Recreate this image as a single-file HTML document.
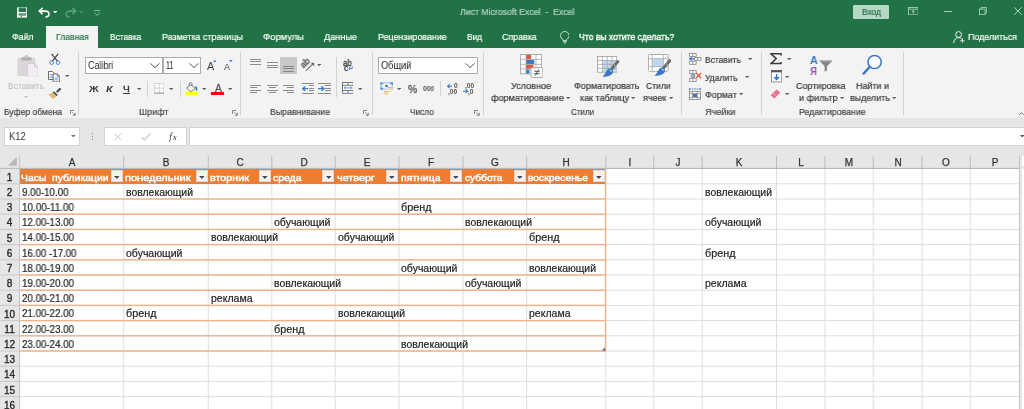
<!DOCTYPE html>
<html><head><meta charset="utf-8"><title>Excel</title>
<style>
html,body{margin:0;padding:0;}
body{width:1024px;height:409px;overflow:hidden;background:#fff;position:relative;font-family:"Liberation Sans",sans-serif;}
.b{position:absolute;display:block;}
.t{position:absolute;white-space:pre;transform-origin:0 50%;will-change:transform;}
</style></head><body>
<div class="b" style="left:0.00px;top:0.00px;width:1024.00px;height:48.00px;background:#217346;"></div>
<div class="b" style="left:0.00px;top:48.00px;width:1024.00px;height:69.90px;background:#f3f3f3;"></div>
<div class="b" style="left:0.00px;top:117.90px;width:1024.00px;height:37.10px;background:#e6e6e6;"></div>
<div class="b" style="left:46.30px;top:26.00px;width:52.20px;height:23.00px;background:#f3f3f3;"></div>
<div class="b" style="left:853.00px;top:4.60px;width:35.50px;height:14.40px;background:#b7d8c5;border-radius:1.2px;"></div>
<div class="b" style="left:77.80px;top:51.50px;width:1.00px;height:63.50px;background:#d2d2d2;"></div>
<div class="b" style="left:240.30px;top:51.50px;width:1.00px;height:63.50px;background:#d2d2d2;"></div>
<div class="b" style="left:371.50px;top:51.50px;width:1.00px;height:63.50px;background:#d2d2d2;"></div>
<div class="b" style="left:483.20px;top:51.50px;width:1.00px;height:63.50px;background:#d2d2d2;"></div>
<div class="b" style="left:680.90px;top:51.50px;width:1.00px;height:63.50px;background:#d2d2d2;"></div>
<div class="b" style="left:761.30px;top:51.50px;width:1.00px;height:63.50px;background:#d2d2d2;"></div>
<div class="b" style="left:903.00px;top:51.50px;width:1.00px;height:63.50px;background:#d2d2d2;"></div>
<div class="b" style="left:147.00px;top:81.30px;width:1.00px;height:15.30px;background:#d2d2d2;"></div>
<div class="b" style="left:179.60px;top:81.30px;width:1.00px;height:15.30px;background:#d2d2d2;"></div>
<div class="b" style="left:336.00px;top:56.50px;width:1.00px;height:40.50px;background:#d2d2d2;"></div>
<div class="b" style="left:440.20px;top:81.00px;width:1.00px;height:15.40px;background:#d2d2d2;"></div>
<svg class="b" style="left:69.90px;top:109.60px;" width="6.00" height="6.00" viewBox="0 0 6 6"><path d="M0.5 4V0.5H4" fill="none" stroke="#777" stroke-width="0.9"/><path d="M2.3 2.3L5 5M5.3 2.8V5.3H2.8" fill="none" stroke="#777" stroke-width="0.9"/></svg>
<svg class="b" style="left:232.20px;top:109.60px;" width="6.00" height="6.00" viewBox="0 0 6 6"><path d="M0.5 4V0.5H4" fill="none" stroke="#777" stroke-width="0.9"/><path d="M2.3 2.3L5 5M5.3 2.8V5.3H2.8" fill="none" stroke="#777" stroke-width="0.9"/></svg>
<svg class="b" style="left:363.40px;top:109.60px;" width="6.00" height="6.00" viewBox="0 0 6 6"><path d="M0.5 4V0.5H4" fill="none" stroke="#777" stroke-width="0.9"/><path d="M2.3 2.3L5 5M5.3 2.8V5.3H2.8" fill="none" stroke="#777" stroke-width="0.9"/></svg>
<svg class="b" style="left:474.10px;top:109.60px;" width="6.00" height="6.00" viewBox="0 0 6 6"><path d="M0.5 4V0.5H4" fill="none" stroke="#777" stroke-width="0.9"/><path d="M2.3 2.3L5 5M5.3 2.8V5.3H2.8" fill="none" stroke="#777" stroke-width="0.9"/></svg>
<svg class="b" style="left:23.90px;top:96.15px;" width="4.20" height="2.30" viewBox="0 0 4.2 2.3"><path d="M0 0H4.2L2.1 2.3Z" fill="#c4c4c4"/></svg>
<svg class="b" style="left:64.80px;top:75.35px;" width="4.20" height="2.30" viewBox="0 0 4.2 2.3"><path d="M0 0H4.2L2.1 2.3Z" fill="#666"/></svg>
<div class="b" style="left:85.20px;top:57.20px;width:77.80px;height:16.80px;background:#fff;border:1px solid #ababab;box-sizing:border-box;"></div>
<div class="b" style="left:162.70px;top:57.20px;width:38.80px;height:16.80px;background:#fff;border:1px solid #ababab;box-sizing:border-box;"></div>
<svg class="b" style="left:150.00px;top:63.40px;" width="10.00" height="5.20" viewBox="0 0 10 5.2"><path d="M0.4 0.4L5.0 4.6000000000000005L9.6 0.4" fill="none" stroke="#444" stroke-width="0.9"/></svg>
<svg class="b" style="left:188.50px;top:63.40px;" width="10.00" height="5.20" viewBox="0 0 10 5.2"><path d="M0.4 0.4L5.0 4.6000000000000005L9.6 0.4" fill="none" stroke="#444" stroke-width="0.9"/></svg>
<svg class="b" style="left:212.50px;top:59.80px;" width="3.60" height="2.30" viewBox="0 0 3.6 2.3"><path d="M0 2.3L1.8 0L3.6 2.3Z" fill="#2b7cd3"/></svg>
<svg class="b" style="left:229.00px;top:59.80px;" width="3.60" height="2.30" viewBox="0 0 3.6 2.3"><path d="M0 0L1.8 2.3L3.6 0Z" fill="#2b7cd3"/></svg>
<div class="b" style="left:122.90px;top:92.90px;width:7.40px;height:1.00px;background:#3b3b3b;"></div>
<svg class="b" style="left:136.90px;top:88.15px;" width="4.20" height="2.30" viewBox="0 0 4.2 2.3"><path d="M0 0H4.2L2.1 2.3Z" fill="#666"/></svg>
<svg class="b" style="left:169.30px;top:88.15px;" width="4.20" height="2.30" viewBox="0 0 4.2 2.3"><path d="M0 0H4.2L2.1 2.3Z" fill="#666"/></svg>
<svg class="b" style="left:201.90px;top:88.15px;" width="4.20" height="2.30" viewBox="0 0 4.2 2.3"><path d="M0 0H4.2L2.1 2.3Z" fill="#666"/></svg>
<svg class="b" style="left:227.70px;top:88.15px;" width="4.20" height="2.30" viewBox="0 0 4.2 2.3"><path d="M0 0H4.2L2.1 2.3Z" fill="#666"/></svg>
<div class="b" style="left:378.40px;top:57.20px;width:99.30px;height:16.80px;background:#fff;border:1px solid #ababab;box-sizing:border-box;"></div>
<svg class="b" style="left:464.60px;top:63.40px;" width="10.00" height="5.20" viewBox="0 0 10 5.2"><path d="M0.4 0.4L5.0 4.6000000000000005L9.6 0.4" fill="none" stroke="#444" stroke-width="0.9"/></svg>
<svg class="b" style="left:396.80px;top:87.95px;" width="4.20" height="2.30" viewBox="0 0 4.2 2.3"><path d="M0 0H4.2L2.1 2.3Z" fill="#666"/></svg>
<svg class="b" style="left:566.00px;top:97.05px;" width="4.20" height="2.30" viewBox="0 0 4.2 2.3"><path d="M0 0H4.2L2.1 2.3Z" fill="#666"/></svg>
<svg class="b" style="left:631.00px;top:97.05px;" width="4.20" height="2.30" viewBox="0 0 4.2 2.3"><path d="M0 0H4.2L2.1 2.3Z" fill="#666"/></svg>
<svg class="b" style="left:668.90px;top:97.05px;" width="4.20" height="2.30" viewBox="0 0 4.2 2.3"><path d="M0 0H4.2L2.1 2.3Z" fill="#666"/></svg>
<svg class="b" style="left:747.60px;top:58.25px;" width="4.20" height="2.30" viewBox="0 0 4.2 2.3"><path d="M0 0H4.2L2.1 2.3Z" fill="#666"/></svg>
<svg class="b" style="left:745.00px;top:76.05px;" width="4.20" height="2.30" viewBox="0 0 4.2 2.3"><path d="M0 0H4.2L2.1 2.3Z" fill="#666"/></svg>
<svg class="b" style="left:738.90px;top:93.25px;" width="4.20" height="2.30" viewBox="0 0 4.2 2.3"><path d="M0 0H4.2L2.1 2.3Z" fill="#666"/></svg>
<svg class="b" style="left:786.50px;top:58.25px;" width="4.20" height="2.30" viewBox="0 0 4.2 2.3"><path d="M0 0H4.2L2.1 2.3Z" fill="#666"/></svg>
<svg class="b" style="left:785.10px;top:75.65px;" width="4.20" height="2.30" viewBox="0 0 4.2 2.3"><path d="M0 0H4.2L2.1 2.3Z" fill="#666"/></svg>
<svg class="b" style="left:785.10px;top:92.95px;" width="4.20" height="2.30" viewBox="0 0 4.2 2.3"><path d="M0 0H4.2L2.1 2.3Z" fill="#666"/></svg>
<svg class="b" style="left:839.70px;top:97.05px;" width="4.20" height="2.30" viewBox="0 0 4.2 2.3"><path d="M0 0H4.2L2.1 2.3Z" fill="#666"/></svg>
<svg class="b" style="left:891.70px;top:97.05px;" width="4.20" height="2.30" viewBox="0 0 4.2 2.3"><path d="M0 0H4.2L2.1 2.3Z" fill="#666"/></svg>
<div class="b" style="left:4.40px;top:126.80px;width:76.10px;height:19.50px;background:#fff;border:1px solid #d4d4d4;box-sizing:border-box;"></div>
<svg class="b" style="left:71.00px;top:134.95px;" width="4.60" height="2.50" viewBox="0 0 4.6 2.5"><path d="M0 0H4.6L2.3 2.5Z" fill="#777"/></svg>
<div class="b" style="left:91.80px;top:133.00px;width:1.00px;height:1.00px;background:#808080;"></div>
<div class="b" style="left:91.80px;top:136.00px;width:1.00px;height:1.00px;background:#808080;"></div>
<div class="b" style="left:91.80px;top:139.00px;width:1.00px;height:1.00px;background:#808080;"></div>
<div class="b" style="left:104.30px;top:126.80px;width:82.30px;height:19.50px;background:#fff;border:1px solid #d4d4d4;box-sizing:border-box;"></div>
<div class="b" style="left:189.30px;top:126.80px;width:840.00px;height:19.50px;background:#fff;border:1px solid #d4d4d4;box-sizing:border-box;"></div>
<svg class="b" style="left:114.30px;top:133.20px;" width="7.80" height="7.40" viewBox="0 0 7.8 7.4"><path d="M0.4 0.4L7.4 7M7.4 0.4L0.4 7" stroke="#c6c6c6" stroke-width="1" fill="none"/></svg>
<svg class="b" style="left:141.00px;top:133.20px;" width="9.80" height="7.40" viewBox="0 0 9.8 7.4"><path d="M0.5 4.2L3.3 6.9L9.3 0.5" stroke="#c6c6c6" stroke-width="1.1" fill="none"/></svg>
<svg class="b" style="left:1020.30px;top:134.95px;" width="4.60" height="2.50" viewBox="0 0 4.6 2.5"><path d="M0 0H4.6L2.3 2.5Z" fill="#555"/></svg>
<div class="b" style="left:0.00px;top:168.60px;width:1024.00px;height:240.40px;background:#fff;"></div>
<div class="b" style="left:0.00px;top:154.50px;width:1019.40px;height:14.10px;background:#e6e6e6;"></div>
<div class="b" style="left:0.00px;top:168.60px;width:19.60px;height:240.40px;background:#e6e6e6;"></div>
<div class="b" style="left:123px;top:169px;width:1px;height:240px;background:rgba(222,222,222,0.800)"></div>
<div class="b" style="left:124px;top:169px;width:1px;height:240px;background:rgba(222,222,222,0.200)"></div>
<div class="b" style="left:207px;top:169px;width:1px;height:240px;background:rgba(222,222,222,0.200)"></div>
<div class="b" style="left:208px;top:169px;width:1px;height:240px;background:rgba(222,222,222,0.800)"></div>
<div class="b" style="left:271px;top:169px;width:1px;height:240px;background:rgba(222,222,222,0.700)"></div>
<div class="b" style="left:272px;top:169px;width:1px;height:240px;background:rgba(222,222,222,0.300)"></div>
<div class="b" style="left:334px;top:169px;width:1px;height:240px;background:rgba(222,222,222,0.300)"></div>
<div class="b" style="left:335px;top:169px;width:1px;height:240px;background:rgba(222,222,222,0.700)"></div>
<div class="b" style="left:398px;top:169px;width:1px;height:240px;background:rgba(222,222,222,0.500)"></div>
<div class="b" style="left:399px;top:169px;width:1px;height:240px;background:rgba(222,222,222,0.500)"></div>
<div class="b" style="left:462px;top:169px;width:1px;height:240px;background:rgba(222,222,222,0.500)"></div>
<div class="b" style="left:463px;top:169px;width:1px;height:240px;background:rgba(222,222,222,0.500)"></div>
<div class="b" style="left:526px;top:169px;width:1px;height:240px;background:rgba(222,222,222,0.800)"></div>
<div class="b" style="left:527px;top:169px;width:1px;height:240px;background:rgba(222,222,222,0.200)"></div>
<div class="b" style="left:605px;top:169px;width:1px;height:240px;background:rgba(222,222,222,0.700)"></div>
<div class="b" style="left:606px;top:169px;width:1px;height:240px;background:rgba(222,222,222,0.300)"></div>
<div class="b" style="left:653px;top:169px;width:1px;height:240px;background:rgba(222,222,222,0.800)"></div>
<div class="b" style="left:654px;top:169px;width:1px;height:240px;background:rgba(222,222,222,0.200)"></div>
<div class="b" style="left:701px;top:169px;width:1px;height:240px;background:rgba(222,222,222,0.300)"></div>
<div class="b" style="left:702px;top:169px;width:1px;height:240px;background:rgba(222,222,222,0.700)"></div>
<div class="b" style="left:776px;top:169px;width:1px;height:240px;background:rgba(222,222,222,1.000)"></div>
<div class="b" style="left:824px;top:169px;width:1px;height:240px;background:rgba(222,222,222,0.600)"></div>
<div class="b" style="left:825px;top:169px;width:1px;height:240px;background:rgba(222,222,222,0.400)"></div>
<div class="b" style="left:872px;top:169px;width:1px;height:240px;background:rgba(222,222,222,0.300)"></div>
<div class="b" style="left:873px;top:169px;width:1px;height:240px;background:rgba(222,222,222,0.700)"></div>
<div class="b" style="left:921px;top:169px;width:1px;height:240px;background:rgba(222,222,222,0.500)"></div>
<div class="b" style="left:922px;top:169px;width:1px;height:240px;background:rgba(222,222,222,0.500)"></div>
<div class="b" style="left:969px;top:169px;width:1px;height:240px;background:rgba(222,222,222,0.200)"></div>
<div class="b" style="left:970px;top:169px;width:1px;height:240px;background:rgba(222,222,222,0.800)"></div>
<div class="b" style="left:20px;top:183px;width:999px;height:1px;background:rgba(222,222,222,0.700)"></div>
<div class="b" style="left:20px;top:184px;width:999px;height:1px;background:rgba(222,222,222,0.300)"></div>
<div class="b" style="left:20px;top:198px;width:999px;height:1px;background:rgba(222,222,222,0.500)"></div>
<div class="b" style="left:20px;top:199px;width:999px;height:1px;background:rgba(222,222,222,0.500)"></div>
<div class="b" style="left:20px;top:213px;width:999px;height:1px;background:rgba(222,222,222,0.300)"></div>
<div class="b" style="left:20px;top:214px;width:999px;height:1px;background:rgba(222,222,222,0.700)"></div>
<div class="b" style="left:20px;top:228px;width:999px;height:1px;background:rgba(222,222,222,0.100)"></div>
<div class="b" style="left:20px;top:229px;width:999px;height:1px;background:rgba(222,222,222,0.900)"></div>
<div class="b" style="left:20px;top:244px;width:999px;height:1px;background:rgba(222,222,222,0.900)"></div>
<div class="b" style="left:20px;top:245px;width:999px;height:1px;background:rgba(222,222,222,0.100)"></div>
<div class="b" style="left:20px;top:259px;width:999px;height:1px;background:rgba(222,222,222,0.700)"></div>
<div class="b" style="left:20px;top:260px;width:999px;height:1px;background:rgba(222,222,222,0.300)"></div>
<div class="b" style="left:20px;top:274px;width:999px;height:1px;background:rgba(222,222,222,0.500)"></div>
<div class="b" style="left:20px;top:275px;width:999px;height:1px;background:rgba(222,222,222,0.500)"></div>
<div class="b" style="left:20px;top:289px;width:999px;height:1px;background:rgba(222,222,222,0.300)"></div>
<div class="b" style="left:20px;top:290px;width:999px;height:1px;background:rgba(222,222,222,0.700)"></div>
<div class="b" style="left:20px;top:304px;width:999px;height:1px;background:rgba(222,222,222,0.100)"></div>
<div class="b" style="left:20px;top:305px;width:999px;height:1px;background:rgba(222,222,222,0.900)"></div>
<div class="b" style="left:20px;top:320px;width:999px;height:1px;background:rgba(222,222,222,0.900)"></div>
<div class="b" style="left:20px;top:321px;width:999px;height:1px;background:rgba(222,222,222,0.100)"></div>
<div class="b" style="left:20px;top:335px;width:999px;height:1px;background:rgba(222,222,222,0.700)"></div>
<div class="b" style="left:20px;top:336px;width:999px;height:1px;background:rgba(222,222,222,0.300)"></div>
<div class="b" style="left:20px;top:350px;width:999px;height:1px;background:rgba(222,222,222,0.500)"></div>
<div class="b" style="left:20px;top:351px;width:999px;height:1px;background:rgba(222,222,222,0.500)"></div>
<div class="b" style="left:20px;top:365px;width:999px;height:1px;background:rgba(222,222,222,0.300)"></div>
<div class="b" style="left:20px;top:366px;width:999px;height:1px;background:rgba(222,222,222,0.700)"></div>
<div class="b" style="left:20px;top:380px;width:999px;height:1px;background:rgba(222,222,222,0.100)"></div>
<div class="b" style="left:20px;top:381px;width:999px;height:1px;background:rgba(222,222,222,0.900)"></div>
<div class="b" style="left:20px;top:396px;width:999px;height:1px;background:rgba(222,222,222,0.900)"></div>
<div class="b" style="left:20px;top:397px;width:999px;height:1px;background:rgba(222,222,222,0.100)"></div>
<div class="b" style="left:20px;top:411px;width:999px;height:1px;background:rgba(222,222,222,0.700)"></div>
<div class="b" style="left:20px;top:412px;width:999px;height:1px;background:rgba(222,222,222,0.300)"></div>
<div class="b" style="left:123px;top:156px;width:1px;height:13px;background:rgba(188,188,188,0.800)"></div>
<div class="b" style="left:124px;top:156px;width:1px;height:13px;background:rgba(188,188,188,0.200)"></div>
<div class="b" style="left:207px;top:156px;width:1px;height:13px;background:rgba(188,188,188,0.200)"></div>
<div class="b" style="left:208px;top:156px;width:1px;height:13px;background:rgba(188,188,188,0.800)"></div>
<div class="b" style="left:271px;top:156px;width:1px;height:13px;background:rgba(188,188,188,0.700)"></div>
<div class="b" style="left:272px;top:156px;width:1px;height:13px;background:rgba(188,188,188,0.300)"></div>
<div class="b" style="left:334px;top:156px;width:1px;height:13px;background:rgba(188,188,188,0.300)"></div>
<div class="b" style="left:335px;top:156px;width:1px;height:13px;background:rgba(188,188,188,0.700)"></div>
<div class="b" style="left:398px;top:156px;width:1px;height:13px;background:rgba(188,188,188,0.500)"></div>
<div class="b" style="left:399px;top:156px;width:1px;height:13px;background:rgba(188,188,188,0.500)"></div>
<div class="b" style="left:462px;top:156px;width:1px;height:13px;background:rgba(188,188,188,0.500)"></div>
<div class="b" style="left:463px;top:156px;width:1px;height:13px;background:rgba(188,188,188,0.500)"></div>
<div class="b" style="left:526px;top:156px;width:1px;height:13px;background:rgba(188,188,188,0.800)"></div>
<div class="b" style="left:527px;top:156px;width:1px;height:13px;background:rgba(188,188,188,0.200)"></div>
<div class="b" style="left:605px;top:156px;width:1px;height:13px;background:rgba(188,188,188,0.700)"></div>
<div class="b" style="left:606px;top:156px;width:1px;height:13px;background:rgba(188,188,188,0.300)"></div>
<div class="b" style="left:653px;top:156px;width:1px;height:13px;background:rgba(188,188,188,0.800)"></div>
<div class="b" style="left:654px;top:156px;width:1px;height:13px;background:rgba(188,188,188,0.200)"></div>
<div class="b" style="left:701px;top:156px;width:1px;height:13px;background:rgba(188,188,188,0.300)"></div>
<div class="b" style="left:702px;top:156px;width:1px;height:13px;background:rgba(188,188,188,0.700)"></div>
<div class="b" style="left:776px;top:156px;width:1px;height:13px;background:rgba(188,188,188,1.000)"></div>
<div class="b" style="left:824px;top:156px;width:1px;height:13px;background:rgba(188,188,188,0.600)"></div>
<div class="b" style="left:825px;top:156px;width:1px;height:13px;background:rgba(188,188,188,0.400)"></div>
<div class="b" style="left:872px;top:156px;width:1px;height:13px;background:rgba(188,188,188,0.300)"></div>
<div class="b" style="left:873px;top:156px;width:1px;height:13px;background:rgba(188,188,188,0.700)"></div>
<div class="b" style="left:921px;top:156px;width:1px;height:13px;background:rgba(188,188,188,0.500)"></div>
<div class="b" style="left:922px;top:156px;width:1px;height:13px;background:rgba(188,188,188,0.500)"></div>
<div class="b" style="left:969px;top:156px;width:1px;height:13px;background:rgba(188,188,188,0.200)"></div>
<div class="b" style="left:970px;top:156px;width:1px;height:13px;background:rgba(188,188,188,0.800)"></div>
<div class="b" style="left:19px;top:156px;width:1px;height:253px;background:rgba(196,196,196,0.900)"></div>
<div class="b" style="left:20px;top:156px;width:1px;height:253px;background:rgba(196,196,196,0.100)"></div>
<div class="b" style="left:0px;top:183px;width:20px;height:1px;background:rgba(201,201,201,0.700)"></div>
<div class="b" style="left:0px;top:184px;width:20px;height:1px;background:rgba(201,201,201,0.300)"></div>
<div class="b" style="left:0px;top:198px;width:20px;height:1px;background:rgba(201,201,201,0.500)"></div>
<div class="b" style="left:0px;top:199px;width:20px;height:1px;background:rgba(201,201,201,0.500)"></div>
<div class="b" style="left:0px;top:213px;width:20px;height:1px;background:rgba(201,201,201,0.300)"></div>
<div class="b" style="left:0px;top:214px;width:20px;height:1px;background:rgba(201,201,201,0.700)"></div>
<div class="b" style="left:0px;top:228px;width:20px;height:1px;background:rgba(201,201,201,0.100)"></div>
<div class="b" style="left:0px;top:229px;width:20px;height:1px;background:rgba(201,201,201,0.900)"></div>
<div class="b" style="left:0px;top:244px;width:20px;height:1px;background:rgba(201,201,201,0.900)"></div>
<div class="b" style="left:0px;top:245px;width:20px;height:1px;background:rgba(201,201,201,0.100)"></div>
<div class="b" style="left:0px;top:259px;width:20px;height:1px;background:rgba(201,201,201,0.700)"></div>
<div class="b" style="left:0px;top:260px;width:20px;height:1px;background:rgba(201,201,201,0.300)"></div>
<div class="b" style="left:0px;top:274px;width:20px;height:1px;background:rgba(201,201,201,0.500)"></div>
<div class="b" style="left:0px;top:275px;width:20px;height:1px;background:rgba(201,201,201,0.500)"></div>
<div class="b" style="left:0px;top:289px;width:20px;height:1px;background:rgba(201,201,201,0.300)"></div>
<div class="b" style="left:0px;top:290px;width:20px;height:1px;background:rgba(201,201,201,0.700)"></div>
<div class="b" style="left:0px;top:304px;width:20px;height:1px;background:rgba(201,201,201,0.100)"></div>
<div class="b" style="left:0px;top:305px;width:20px;height:1px;background:rgba(201,201,201,0.900)"></div>
<div class="b" style="left:0px;top:320px;width:20px;height:1px;background:rgba(201,201,201,0.900)"></div>
<div class="b" style="left:0px;top:321px;width:20px;height:1px;background:rgba(201,201,201,0.100)"></div>
<div class="b" style="left:0px;top:335px;width:20px;height:1px;background:rgba(201,201,201,0.700)"></div>
<div class="b" style="left:0px;top:336px;width:20px;height:1px;background:rgba(201,201,201,0.300)"></div>
<div class="b" style="left:0px;top:350px;width:20px;height:1px;background:rgba(201,201,201,0.500)"></div>
<div class="b" style="left:0px;top:351px;width:20px;height:1px;background:rgba(201,201,201,0.500)"></div>
<div class="b" style="left:0px;top:365px;width:20px;height:1px;background:rgba(201,201,201,0.300)"></div>
<div class="b" style="left:0px;top:366px;width:20px;height:1px;background:rgba(201,201,201,0.700)"></div>
<div class="b" style="left:0px;top:380px;width:20px;height:1px;background:rgba(201,201,201,0.100)"></div>
<div class="b" style="left:0px;top:381px;width:20px;height:1px;background:rgba(201,201,201,0.900)"></div>
<div class="b" style="left:0px;top:396px;width:20px;height:1px;background:rgba(201,201,201,0.900)"></div>
<div class="b" style="left:0px;top:397px;width:20px;height:1px;background:rgba(201,201,201,0.100)"></div>
<div class="b" style="left:0px;top:411px;width:20px;height:1px;background:rgba(201,201,201,0.700)"></div>
<div class="b" style="left:0px;top:412px;width:20px;height:1px;background:rgba(201,201,201,0.300)"></div>
<div class="b" style="left:0px;top:167px;width:1019px;height:1px;background:rgba(180,180,180,0.100)"></div>
<div class="b" style="left:0px;top:168px;width:1019px;height:1px;background:rgba(180,180,180,0.900)"></div>
<svg class="b" style="left:7.90px;top:157.20px;" width="8.80" height="8.80" viewBox="0 0 8.8 8.8"><path d="M8.8 0V8.8H0Z" fill="#b7b7b7"/></svg>
<div class="b" style="left:1019.40px;top:146.30px;width:5.00px;height:270.00px;background:#e6e6e6;"></div>
<div class="b" style="left:1018.90px;top:155.00px;width:1.00px;height:260.00px;background:#c6c6c6;"></div>
<div class="b" style="left:1022.00px;top:155.70px;width:3.00px;height:10.30px;background:#fff;"></div>
<div class="b" style="left:1022.00px;top:168.60px;width:3.00px;height:250.00px;background:#fdfdfd;"></div>
<div class="b" style="left:19.90px;top:168.60px;width:586.50px;height:15.30px;background:#ed7d31;"></div>
<div class="b" style="left:20px;top:198px;width:586px;height:1px;background:rgba(244,177,131,0.700)"></div>
<div class="b" style="left:20px;top:199px;width:586px;height:1px;background:rgba(244,177,131,0.700)"></div>
<div class="b" style="left:20px;top:213px;width:586px;height:1px;background:rgba(244,177,131,0.500)"></div>
<div class="b" style="left:20px;top:214px;width:586px;height:1px;background:rgba(244,177,131,0.900)"></div>
<div class="b" style="left:20px;top:228px;width:586px;height:1px;background:rgba(244,177,131,0.300)"></div>
<div class="b" style="left:20px;top:229px;width:586px;height:1px;background:rgba(244,177,131,1.000)"></div>
<div class="b" style="left:20px;top:230px;width:586px;height:1px;background:rgba(244,177,131,0.100)"></div>
<div class="b" style="left:20px;top:243px;width:586px;height:1px;background:rgba(244,177,131,0.100)"></div>
<div class="b" style="left:20px;top:244px;width:586px;height:1px;background:rgba(244,177,131,1.000)"></div>
<div class="b" style="left:20px;top:245px;width:586px;height:1px;background:rgba(244,177,131,0.300)"></div>
<div class="b" style="left:20px;top:259px;width:586px;height:1px;background:rgba(244,177,131,0.900)"></div>
<div class="b" style="left:20px;top:260px;width:586px;height:1px;background:rgba(244,177,131,0.500)"></div>
<div class="b" style="left:20px;top:274px;width:586px;height:1px;background:rgba(244,177,131,0.700)"></div>
<div class="b" style="left:20px;top:275px;width:586px;height:1px;background:rgba(244,177,131,0.700)"></div>
<div class="b" style="left:20px;top:289px;width:586px;height:1px;background:rgba(244,177,131,0.500)"></div>
<div class="b" style="left:20px;top:290px;width:586px;height:1px;background:rgba(244,177,131,0.900)"></div>
<div class="b" style="left:20px;top:304px;width:586px;height:1px;background:rgba(244,177,131,0.300)"></div>
<div class="b" style="left:20px;top:305px;width:586px;height:1px;background:rgba(244,177,131,1.000)"></div>
<div class="b" style="left:20px;top:306px;width:586px;height:1px;background:rgba(244,177,131,0.100)"></div>
<div class="b" style="left:20px;top:319px;width:586px;height:1px;background:rgba(244,177,131,0.100)"></div>
<div class="b" style="left:20px;top:320px;width:586px;height:1px;background:rgba(244,177,131,1.000)"></div>
<div class="b" style="left:20px;top:321px;width:586px;height:1px;background:rgba(244,177,131,0.300)"></div>
<div class="b" style="left:20px;top:335px;width:586px;height:1px;background:rgba(244,177,131,0.900)"></div>
<div class="b" style="left:20px;top:336px;width:586px;height:1px;background:rgba(244,177,131,0.500)"></div>
<div class="b" style="left:20px;top:350px;width:586px;height:1px;background:rgba(244,177,131,0.700)"></div>
<div class="b" style="left:20px;top:351px;width:586px;height:1px;background:rgba(244,177,131,0.700)"></div>
<div class="b" style="left:604px;top:169px;width:1px;height:183px;background:rgba(244,177,131,0.150)"></div>
<div class="b" style="left:605px;top:169px;width:1px;height:183px;background:rgba(244,177,131,1.000)"></div>
<div class="b" style="left:606px;top:169px;width:1px;height:183px;background:rgba(244,177,131,0.150)"></div>
<svg class="b" style="left:602.00px;top:347.40px;" width="3.40" height="3.40" viewBox="0 0 3.4 3.4"><path d="M3.6 0V3.6H0Z" fill="#2f5597"/></svg>
<div class="b" style="left:110.90px;top:170.40px;width:12.00px;height:11.90px;background:#f4f4f8;border:1px solid #d9d9e0;box-sizing:border-box;"></div>
<svg class="b" style="left:114.10px;top:175.70px;" width="5.60" height="3.00" viewBox="0 0 5.6 3.0"><path d="M0 0H5.6L2.8 3.0Z" fill="#4a4a4a"/></svg>
<div class="b" style="left:195.50px;top:170.40px;width:12.00px;height:11.90px;background:#f4f4f8;border:1px solid #d9d9e0;box-sizing:border-box;"></div>
<svg class="b" style="left:198.70px;top:175.70px;" width="5.60" height="3.00" viewBox="0 0 5.6 3.0"><path d="M0 0H5.6L2.8 3.0Z" fill="#4a4a4a"/></svg>
<div class="b" style="left:259.00px;top:170.40px;width:12.00px;height:11.90px;background:#f4f4f8;border:1px solid #d9d9e0;box-sizing:border-box;"></div>
<svg class="b" style="left:262.20px;top:175.70px;" width="5.60" height="3.00" viewBox="0 0 5.6 3.0"><path d="M0 0H5.6L2.8 3.0Z" fill="#4a4a4a"/></svg>
<div class="b" style="left:322.40px;top:170.40px;width:12.00px;height:11.90px;background:#f4f4f8;border:1px solid #d9d9e0;box-sizing:border-box;"></div>
<svg class="b" style="left:325.60px;top:175.70px;" width="5.60" height="3.00" viewBox="0 0 5.6 3.0"><path d="M0 0H5.6L2.8 3.0Z" fill="#4a4a4a"/></svg>
<div class="b" style="left:386.20px;top:170.40px;width:12.00px;height:11.90px;background:#f4f4f8;border:1px solid #d9d9e0;box-sizing:border-box;"></div>
<svg class="b" style="left:389.40px;top:175.70px;" width="5.60" height="3.00" viewBox="0 0 5.6 3.0"><path d="M0 0H5.6L2.8 3.0Z" fill="#4a4a4a"/></svg>
<div class="b" style="left:450.20px;top:170.40px;width:12.00px;height:11.90px;background:#f4f4f8;border:1px solid #d9d9e0;box-sizing:border-box;"></div>
<svg class="b" style="left:453.40px;top:175.70px;" width="5.60" height="3.00" viewBox="0 0 5.6 3.0"><path d="M0 0H5.6L2.8 3.0Z" fill="#4a4a4a"/></svg>
<div class="b" style="left:513.90px;top:170.40px;width:12.00px;height:11.90px;background:#f4f4f8;border:1px solid #d9d9e0;box-sizing:border-box;"></div>
<svg class="b" style="left:517.10px;top:175.70px;" width="5.60" height="3.00" viewBox="0 0 5.6 3.0"><path d="M0 0H5.6L2.8 3.0Z" fill="#4a4a4a"/></svg>
<div class="b" style="left:593.00px;top:170.40px;width:12.00px;height:11.90px;background:#f4f4f8;border:1px solid #d9d9e0;box-sizing:border-box;"></div>
<svg class="b" style="left:596.20px;top:175.70px;" width="5.60" height="3.00" viewBox="0 0 5.6 3.0"><path d="M0 0H5.6L2.8 3.0Z" fill="#4a4a4a"/></svg>
<svg class="b" style="left:16.60px;top:7.40px;" width="10.80" height="10.80" viewBox="0 0 10.8 10.8"><path d="M0.9 0.5V10.4M9.9 0.5V10.4" fill="none" stroke="#fff" stroke-width="1.5"/><path d="M0.6 0.7H10.2" stroke="#fff" stroke-opacity="0.55" stroke-width="1"/><path d="M1 5.7H9.8" stroke="#fff" stroke-width="1.5"/><path d="M0.4 9.6H10.4" stroke="#fff" stroke-width="1.9"/><path d="M2.3 8.8V7.9H8.5V8.8" fill="none" stroke="#fff" stroke-opacity="0.5" stroke-width="0.8"/><rect x="3.9" y="8.7" width="1.2" height="1.2" fill="#217346"/></svg>
<svg class="b" style="left:38.00px;top:7.00px;" width="12.00" height="11.00" viewBox="0 0 12 11"><path d="M4.6 0.9L1.2 4.1L4.6 7.2" fill="none" stroke="#fff" stroke-width="1.6"/><path d="M1.6 4.1H7.4C9.6 4.1 11 5.5 11 7.1C11 8.9 9.6 10 7.4 10.1" fill="none" stroke="#fff" stroke-width="1.6"/></svg>
<svg class="b" style="left:52.80px;top:11.00px;" width="4.40" height="2.40" viewBox="0 0 4.4 2.4"><path d="M0 0H4.4L2.2 2.4Z" fill="#fff"/></svg>
<svg class="b" style="left:64.60px;top:7.00px;" width="12.00" height="11.00" viewBox="0 0 12 11"><path d="M7.4 0.9L10.8 4.1L7.4 7.2" fill="none" stroke="#5a9d78" stroke-width="1.6"/><path d="M10.4 4.1H4.6C2.4 4.1 1 5.5 1 7.1C1 8.9 2.4 10 4.6 10.1" fill="none" stroke="#5a9d78" stroke-width="1.6"/></svg>
<svg class="b" style="left:79.20px;top:11.00px;" width="4.40" height="2.40" viewBox="0 0 4.4 2.4"><path d="M0 0H4.4L2.2 2.4Z" fill="#4f9470"/></svg>
<svg class="b" style="left:93.70px;top:9.50px;" width="6.40" height="6.00" viewBox="0 0 6.4 6"><path d="M0.2 0.6H6.2" stroke="#8bbda1" stroke-width="1"/><path d="M0.5 2.8L3.2 5.4L5.9 2.8" fill="none" stroke="#8bbda1" stroke-width="1"/></svg>
<svg class="b" style="left:907.70px;top:7.10px;" width="10.60" height="8.40" viewBox="0 0 10.6 8.4"><rect x="0.5" y="0.5" width="9.6" height="7.4" fill="none" stroke="#a9cfba" stroke-width="0.9"/><path d="M0.5 2.2H10.1" stroke="#a9cfba" stroke-width="0.9"/><path d="M5.3 7V3.6M3.8 5L5.3 3.5L6.8 5" fill="none" stroke="#a9cfba" stroke-width="0.9"/></svg>
<div class="b" style="left:944.10px;top:11.20px;width:7.80px;height:0.90px;background:#a9cfba;"></div>
<svg class="b" style="left:979.00px;top:7.10px;" width="8.20" height="8.20" viewBox="0 0 8.2 8.2"><rect x="0.5" y="2.1" width="5.6" height="5.6" fill="none" stroke="#a9cfba" stroke-width="0.9"/><path d="M2.1 2.1V0.5H7.7V6.1H6.1" fill="none" stroke="#a9cfba" stroke-width="0.9"/></svg>
<svg class="b" style="left:1014.00px;top:7.40px;" width="8.00" height="8.00" viewBox="0 0 8 8"><path d="M0.3 0.3L7.7 7.7M7.7 0.3L0.3 7.7" stroke="#c4decf" stroke-width="0.9" fill="none"/></svg>
<svg class="b" style="left:953.00px;top:31.00px;" width="12.40" height="12.60" viewBox="0 0 12.4 12.6"><circle cx="5.6" cy="3.5" r="2.9" fill="none" stroke="#fff" stroke-width="0.9"/><path d="M0.6 12C0.9 8.6 3 6.6 5.6 6.6C6.9 6.6 8 7.1 8.8 7.9" fill="none" stroke="#fff" stroke-width="0.9"/><path d="M9.4 7.6V11.8M7.3 9.7H11.5" stroke="#fff" stroke-width="0.9"/></svg>
<svg class="b" style="left:559.60px;top:31.00px;" width="9.80" height="12.80" viewBox="0 0 9.8 12.8"><path d="M3.3 8.8C1.6 7.8 0.5 6.4 0.5 4.6C0.5 2.3 2.4 0.5 4.8 0.5C7.2 0.5 9.1 2.3 9.1 4.6C9.1 6.4 8 7.8 6.3 8.8V10.8H3.3Z" fill="none" stroke="#d7e9df" stroke-width="0.9"/><path d="M3.4 9.6H6.2M3.8 12H5.8" stroke="#d7e9df" stroke-width="0.9"/></svg>
<svg class="b" style="left:16.60px;top:54.60px;" width="21.60" height="22.80" viewBox="0 0 21.6 22.8"><rect x="0.4" y="2.7" width="18" height="18.4" rx="0.8" fill="#d9d5d9"/><path d="M4.4 5.6V2.2H7.4C7.4 -0.4 11.4 -0.4 11.4 2.2H14.4V5.6Z" fill="#b3afb3"/><circle cx="9.4" cy="1.9" r="0.9" fill="#e6e3e6"/><path d="M10.6 8.6H17.6L21 12V22.3H10.6Z" fill="#f1edf3" stroke="#cbc7cc" stroke-width="0.8"/><path d="M17.6 8.6V12H21" fill="none" stroke="#cbc7cc" stroke-width="0.8"/></svg>
<svg class="b" style="left:48.60px;top:53.00px;" width="12.00" height="12.40" viewBox="0 0 12 12.4"><path d="M2.6 0.8L8.4 8.2M9.2 0.8L3.4 8.2" stroke="#484848" stroke-width="1.3" fill="none"/><circle cx="2.7" cy="9.7" r="1.8" fill="none" stroke="#4a84cc" stroke-width="1.0"/><circle cx="9.1" cy="9.7" r="1.8" fill="none" stroke="#4a84cc" stroke-width="1.0"/></svg>
<svg class="b" style="left:47.80px;top:70.70px;" width="12.60" height="11.60" viewBox="0 0 12.6 11.6"><path d="M0.5 0.5H4.4L6.4 2.5V8.5H0.5Z" fill="#fff" stroke="#5a5a5a" stroke-width="0.9"/><path d="M1.8 3.4H4.8M1.8 5H4.8M1.8 6.6H4.8" stroke="#4a86cf" stroke-width="0.7"/><path d="M5.2 2.9H9.4L11.8 5.3V11H5.2Z" fill="#fff" stroke="#5a5a5a" stroke-width="0.9"/><path d="M9.2 3V5.5H11.7" fill="none" stroke="#5a5a5a" stroke-width="0.7"/><path d="M6.6 7.2H10.4M6.6 8.9H10.4" stroke="#4a86cf" stroke-width="0.8"/></svg>
<svg class="b" style="left:48.40px;top:88.00px;" width="13.00" height="11.40" viewBox="0 0 13 11.4"><path d="M12 1L9.4 3.6" stroke="#4f4f4f" stroke-width="2.2" stroke-linecap="round"/><path d="M6 3.2L9.8 7L8.4 8.2L4.6 4.4Z" fill="#4f4f4f"/><path d="M4.4 4.6L8.2 8.4L5.2 11.2L0.4 6.6Z" fill="#e9b96b"/></svg>
<svg class="b" style="left:153.80px;top:83.00px;" width="10.40" height="11.00" viewBox="0 0 10.4 11"><rect x="0.6" y="0.6" width="9.2" height="9.2" fill="#fff"/><path d="M0.6 0.6H9.8M0.6 0.6V9.8M9.8 0.6V9.8M5.2 0.6V9.8M0.6 5.2H9.8" stroke="#b4b4b4" stroke-width="0.9" stroke-dasharray="1 0.6" fill="none"/><path d="M0.2 10.1H10.2" stroke="#9a9a9a" stroke-width="1.2"/></svg>
<svg class="b" style="left:185.40px;top:82.00px;" width="13.00" height="13.00" viewBox="0 0 13 13"><path d="M5.8 2.8L10.2 6.4L6 9.8L1.6 6.2Z" fill="#fff" stroke="#666" stroke-width="0.9" stroke-linejoin="round"/><path d="M4.2 3.8V1.6C4.2 0.3 7 0.3 7 1.8V3.6" fill="none" stroke="#777" stroke-width="1"/><path d="M10 3.8C12.4 4.6 13 6.8 12 8.8C10.8 8.8 10.2 7.6 10.6 6.2Z" fill="#3a7bd0"/><rect x="0.3" y="9.9" width="12.4" height="2.9" fill="#ffff00"/></svg>
<div class="b" style="left:211.40px;top:91.90px;width:12.40px;height:2.90px;background:#ff0000;"></div>
<div class="b" style="left:250.10px;top:58.90px;width:10.80px;height:1.00px;background:#8c8c8c;"></div>
<div class="b" style="left:250.10px;top:61.20px;width:10.80px;height:1.00px;background:#8c8c8c;"></div>
<div class="b" style="left:250.10px;top:63.60px;width:10.80px;height:1.00px;background:#8c8c8c;"></div>
<div class="b" style="left:266.80px;top:62.20px;width:10.80px;height:1.00px;background:#8c8c8c;"></div>
<div class="b" style="left:266.80px;top:64.50px;width:10.80px;height:1.00px;background:#8c8c8c;"></div>
<div class="b" style="left:266.80px;top:66.90px;width:10.80px;height:1.00px;background:#8c8c8c;"></div>
<div class="b" style="left:280.40px;top:57.10px;width:16.50px;height:16.90px;background:#c8c8c8;"></div>
<div class="b" style="left:283.30px;top:66.10px;width:10.80px;height:1.00px;background:#858585;"></div>
<div class="b" style="left:283.30px;top:68.40px;width:10.80px;height:1.00px;background:#858585;"></div>
<div class="b" style="left:283.30px;top:70.70px;width:10.80px;height:1.00px;background:#858585;"></div>
<div class="b" style="left:250.10px;top:84.90px;width:10.80px;height:1.00px;background:#8c8c8c;"></div>
<div class="b" style="left:250.10px;top:87.20px;width:7.30px;height:1.00px;background:#8c8c8c;"></div>
<div class="b" style="left:250.10px;top:89.50px;width:10.80px;height:1.00px;background:#8c8c8c;"></div>
<div class="b" style="left:250.10px;top:91.90px;width:7.30px;height:1.00px;background:#8c8c8c;"></div>
<div class="b" style="left:266.80px;top:84.90px;width:10.80px;height:1.00px;background:#8c8c8c;"></div>
<div class="b" style="left:268.50px;top:87.20px;width:7.40px;height:1.00px;background:#8c8c8c;"></div>
<div class="b" style="left:266.80px;top:89.50px;width:10.80px;height:1.00px;background:#8c8c8c;"></div>
<div class="b" style="left:268.50px;top:91.90px;width:7.40px;height:1.00px;background:#8c8c8c;"></div>
<div class="b" style="left:283.30px;top:84.90px;width:10.80px;height:1.00px;background:#8c8c8c;"></div>
<div class="b" style="left:286.70px;top:87.20px;width:7.40px;height:1.00px;background:#8c8c8c;"></div>
<div class="b" style="left:283.30px;top:89.50px;width:10.80px;height:1.00px;background:#8c8c8c;"></div>
<div class="b" style="left:286.70px;top:91.90px;width:7.40px;height:1.00px;background:#8c8c8c;"></div>
<div class="b" style="left:301.80px;top:83.00px;width:12.20px;height:1.00px;background:#8c8c8c;"></div>
<div class="b" style="left:309.20px;top:85.40px;width:4.80px;height:1.00px;background:#8c8c8c;"></div>
<div class="b" style="left:309.20px;top:87.80px;width:4.80px;height:1.00px;background:#8c8c8c;"></div>
<div class="b" style="left:309.20px;top:90.20px;width:4.80px;height:1.00px;background:#8c8c8c;"></div>
<div class="b" style="left:301.80px;top:92.60px;width:12.20px;height:1.00px;background:#8c8c8c;"></div>
<svg class="b" style="left:301.60px;top:85.60px;" width="6.60" height="5.40" viewBox="0 0 6.6 5.4"><path d="M6.6 2.7H1.4M3.2 0.4L0.6 2.7L3.2 5" fill="none" stroke="#3a7bd0" stroke-width="1.3"/></svg>
<div class="b" style="left:318.30px;top:83.00px;width:12.40px;height:1.00px;background:#8c8c8c;"></div>
<div class="b" style="left:325.30px;top:85.40px;width:5.40px;height:1.00px;background:#8c8c8c;"></div>
<div class="b" style="left:325.30px;top:87.80px;width:5.40px;height:1.00px;background:#8c8c8c;"></div>
<div class="b" style="left:325.30px;top:90.20px;width:5.40px;height:1.00px;background:#8c8c8c;"></div>
<div class="b" style="left:318.30px;top:92.60px;width:12.40px;height:1.00px;background:#8c8c8c;"></div>
<svg class="b" style="left:318.20px;top:85.60px;" width="6.60" height="5.40" viewBox="0 0 6.6 5.4"><path d="M0 2.7H5.2M3.4 0.4L6 2.7L3.4 5" fill="none" stroke="#3a7bd0" stroke-width="1.3"/></svg>
<span class="t" style="left:300.2px;top:57.1px;font-size:9px;line-height:12px;color:#444;-webkit-text-stroke:0.25px #444;transform:rotate(-45deg);transform-origin:50% 50%;">ab</span>
<svg class="b" style="left:304.60px;top:61.60px;" width="10.00" height="9.40" viewBox="0 0 10 9.4"><path d="M0.8 8.8L8.2 1.6" stroke="#666" stroke-width="1.1"/><path d="M5.8 0.8H9.2V4.2Z" fill="#666"/></svg>
<svg class="b" style="left:316.50px;top:64.05px;" width="4.20" height="2.30" viewBox="0 0 4.2 2.3"><path d="M0 0H4.2L2.1 2.3Z" fill="#666"/></svg>
<svg class="b" style="left:347.80px;top:65.80px;" width="4.80" height="4.60" viewBox="0 0 4.8 4.6"><path d="M4.2 0.3V2.6H1M2.4 1L0.7 2.6L2.4 4.2" fill="none" stroke="#3a7bd0" stroke-width="0.9"/></svg>
<svg class="b" style="left:341.60px;top:82.30px;" width="11.80" height="11.80" viewBox="0 0 11.8 11.8"><rect x="0.5" y="0.5" width="10.8" height="10.8" fill="#fff" stroke="#6b6b6b" stroke-width="0.9"/><path d="M0.5 3.3H11.3M0.5 8.5H11.3M5.9 0.5V3.3M5.9 8.5V11.3" stroke="#6b6b6b" stroke-width="0.9" fill="none"/><path d="M2.2 5.9H9.6M3.6 4.6L2.2 5.9L3.6 7.2M8.2 4.6L9.6 5.9L8.2 7.2" stroke="#3a7bd0" stroke-width="0.8" fill="none"/></svg>
<svg class="b" style="left:358.30px;top:88.05px;" width="4.20" height="2.30" viewBox="0 0 4.2 2.3"><path d="M0 0H4.2L2.1 2.3Z" fill="#666"/></svg>
<svg class="b" style="left:380.00px;top:82.20px;" width="13.40" height="13.00" viewBox="0 0 13.4 13"><rect x="0.3" y="0.3" width="12.8" height="7.4" rx="0.8" fill="#a9c9ea"/><path d="M0.6 0.6H3.2L0.6 3ZM12.8 0.6H10.2L12.8 3ZM0.6 7.4H3.2L0.6 5ZM12.8 7.4H10.2L12.8 5Z" fill="#3a78c6"/><path d="M1.4 4L4.2 1.4H9.2L12 4L9.2 6.6H4.2Z" fill="#fff"/><ellipse cx="6.6" cy="4" rx="1.5" ry="1.3" fill="#3a78c6"/><rect x="7" y="4.7" width="5.8" height="6" rx="1" fill="#f3f3f3" fill-opacity="0.9"/><path d="M7.6 5.7H12.4" stroke="#e8b560" stroke-width="1.3"/><path d="M7.8 7.8H12.2" stroke="#efcd95" stroke-width="1"/><path d="M8.6 9.8H11.6" stroke="#f3dcb6" stroke-width="0.9"/><rect x="3.4" y="8.6" width="5.4" height="4.2" rx="1" fill="#f3f3f3"/><path d="M4 9.7H8.4" stroke="#e8b560" stroke-width="1.3"/><path d="M4.2 11.9H8.2" stroke="#eec27c" stroke-width="1.1"/></svg>
<svg class="b" style="left:446.60px;top:84.00px;" width="5.40" height="4.60" viewBox="0 0 5.4 4.6"><path d="M5.4 2.3H1.2M2.8 0.4L0.6 2.3L2.8 4.2" fill="none" stroke="#3a78c6" stroke-width="1.1"/></svg>
<svg class="b" style="left:463.00px;top:89.40px;" width="5.60" height="4.60" viewBox="0 0 5.6 4.6"><path d="M0 2.3H4.2M2.6 0.4L4.8 2.3L2.6 4.2" fill="none" stroke="#3a78c6" stroke-width="1.1"/></svg>
<svg class="b" style="left:519.60px;top:53.90px;" width="23.60" height="24.00" viewBox="0 0 23.6 24"><rect x="0.5" y="0.5" width="21" height="19.3" fill="#fff" stroke="#a6a6a6" stroke-width="0.9"/><rect x="6" y="0.9" width="5.1" height="4.3" fill="#e05a3a"/><rect x="6" y="5.8" width="8.3" height="4.3" fill="#3a78c6"/><rect x="6" y="10.6" width="7.5" height="4.3" fill="#e05a3a"/><rect x="6" y="15.3" width="3.4" height="4.3" fill="#3a78c6"/><path d="M6 0.5V19.8M16 0.5V19.8M0.5 5.4H21.5M0.5 10.3H21.5M0.5 14.9H21.5" stroke="#a6a6a6" stroke-width="0.8" fill="none"/><rect x="10.9" y="13.7" width="12.1" height="9.7" rx="1.2" fill="#fff" stroke="#a0a0a0" stroke-width="1"/><path d="M14.2 17.3H19.8M14.2 19.7H19.8M18.6 15.6L15.4 21.6" stroke="#444" stroke-width="0.9" fill="none"/></svg>
<svg class="b" style="left:596.50px;top:55.50px;" width="20.40" height="17.00" viewBox="0 0 20.4 17"><rect x="0.5" y="0.5" width="19.2" height="15.7" fill="#fff" stroke="#a6a6a6" stroke-width="0.9"/><rect x="5.4" y="4.5" width="14.2" height="11.6" fill="#bdd7ee"/><path d="M5.4 0.5V16.2M10.1 0.5V16.2M14.9 0.5V16.2M0.5 4.5H19.7M0.5 8.4H19.7M0.5 12.3H19.7" stroke="#a6a6a6" stroke-width="0.8" fill="none"/></svg>
<svg class="b" style="left:602.40px;top:60.20px;" width="17.40" height="17.40" viewBox="0 0 17.4 17.4"><path d="M16.6 0.6L9.4 9.2" stroke="#6e6e6e" stroke-width="3" stroke-linecap="butt"/><path d="M12 4.6L13.4 6" stroke="#f3f3f3" stroke-width="0.7"/><path d="M8 8.4C10 8.4 11.4 10 11 12C10.6 15 7 16.8 0.4 16.8C3.6 14.4 4.6 8.6 8 8.4Z" fill="#3a78c6"/><path d="M7.6 10.2C8.8 9.8 9.8 10.6 9.8 11.8C9 11.4 8.2 11.2 7.6 10.2Z" fill="#fff"/></svg>
<svg class="b" style="left:648.40px;top:53.90px;" width="20.80" height="18.00" viewBox="0 0 20.8 18"><rect x="0.5" y="0.5" width="19.7" height="16.9" rx="0.8" fill="#fff" stroke="#a6a6a6" stroke-width="0.9"/><rect x="4.1" y="4.7" width="11.2" height="8" fill="#bdd7ee"/><path d="M4.1 0.5V17.4M15.3 0.5V17.4M0.5 4.7H20.2M0.5 12.7H20.2" stroke="#a6a6a6" stroke-width="0.8" fill="none"/></svg>
<svg class="b" style="left:653.90px;top:59.20px;" width="17.40" height="17.40" viewBox="0 0 17.4 17.4"><path d="M16.6 0.6L9.4 9.2" stroke="#6e6e6e" stroke-width="3" stroke-linecap="butt"/><path d="M12 4.6L13.4 6" stroke="#f3f3f3" stroke-width="0.7"/><path d="M8 8.4C10 8.4 11.4 10 11 12C10.6 15 7 16.8 0.4 16.8C3.6 14.4 4.6 8.6 8 8.4Z" fill="#3a78c6"/><path d="M7.6 10.2C8.8 9.8 9.8 10.6 9.8 11.8C9 11.4 8.2 11.2 7.6 10.2Z" fill="#fff"/></svg>
<svg class="b" style="left:689.30px;top:53.10px;" width="12.40" height="12.00" viewBox="0 0 12.4 12"><path d="M0.5 0.5H7.2V3.6H0.5ZM0.5 8.2H7.2V11.4H0.5ZM3.8 0.5V3.6M3.8 8.2V11.4" fill="#fff" stroke="#7f7f7f" stroke-width="0.8"/><path d="M5.6 4.5H11.9V7.4H5.6ZM8.7 4.5V7.4" fill="#fff" stroke="#7f7f7f" stroke-width="0.8"/><path d="M5.4 5.9H1.2M2.8 4.2L0.8 5.9L2.8 7.6" fill="none" stroke="#3a78c6" stroke-width="1.1"/></svg>
<svg class="b" style="left:689.30px;top:70.30px;" width="12.80" height="12.20" viewBox="0 0 12.8 12.2"><path d="M0.5 0.5H7.2V3.6H0.5ZM0.5 8.4H7.2V11.6H0.5ZM3.8 0.5V3.6M3.8 8.4V11.6" fill="#fff" stroke="#7f7f7f" stroke-width="0.8"/><path d="M2.2 4.6H5.6V7.4H2.2Z" fill="#dce9f7" stroke="#7f7f7f" stroke-width="0.7"/><path d="M2.6 6H5.4M4.4 4.8L5.8 6L4.4 7.2" fill="none" stroke="#3a78c6" stroke-width="0.8"/><path d="M7.2 3L12.2 8M12.2 3L7.2 8" stroke="#e8553a" stroke-width="1.2" fill="none"/></svg>
<svg class="b" style="left:689.30px;top:88.00px;" width="12.00" height="12.20" viewBox="0 0 12 12.2"><path d="M0.4 1H11.4" stroke="#3a78c6" stroke-width="1.1" stroke-dasharray="1.6 0.8"/><path d="M0.4 0V2M11.4 0V2" stroke="#3a78c6" stroke-width="0.8"/><rect x="0.5" y="3.4" width="10.9" height="8.2" fill="#fff" stroke="#7f7f7f" stroke-width="0.8"/><rect x="3.8" y="5.8" width="4.2" height="3.4" fill="#3a78c6"/><path d="M3.4 3.4V11.6M8.4 3.4V11.6M0.5 5.6H11.4M0.5 9.4H11.4" stroke="#7f7f7f" stroke-width="0.7" fill="none"/></svg>
<svg class="b" style="left:770.00px;top:53.20px;" width="12.00" height="11.40" viewBox="0 0 12 11.4"><path d="M11 2.4V0.8H1L6.2 5.6L1 10.6H11V9" fill="none" stroke="#3c3c3c" stroke-width="1.5" stroke-linejoin="miter"/></svg>
<svg class="b" style="left:770.60px;top:70.30px;" width="11.20" height="12.40" viewBox="0 0 11.2 12.4"><rect x="0.5" y="0.5" width="10.2" height="11.4" fill="#fff" stroke="#8a8a8a" stroke-width="0.9"/><rect x="0.1" y="0.1" width="11" height="2.2" fill="#5a5a5a"/><path d="M5.6 4V9.4M3.2 7L5.6 9.6L8 7" fill="none" stroke="#2f74c8" stroke-width="1.4"/></svg>
<svg class="b" style="left:770.40px;top:88.60px;" width="10.80" height="10.00" viewBox="0 0 10.8 10"><path d="M6.6 0.6L10.2 3.6L4.4 9.4L0.6 6.2Z" fill="#ea6f8a"/><path d="M2.9 3.9L6.7 7.1" stroke="#f6b6c4" stroke-width="0.8"/></svg>
<svg class="b" style="left:818.60px;top:60.40px;" width="13.60" height="11.80" viewBox="0 0 13.6 11.8"><path d="M0.2 0.6H13.4L8 6.2V10.8L5.6 11.4V6.2Z" fill="#858585"/><path d="M2.4 1.6H11.2" stroke="#a5a5a5" stroke-width="0.8"/></svg>
<svg class="b" style="left:861.60px;top:54.00px;" width="20.40" height="21.40" viewBox="0 0 20.4 21.4"><circle cx="12.6" cy="8" r="6.6" fill="#fff" stroke="#3a78c6" stroke-width="1.5"/><path d="M7.8 12.8L1.6 19.6" stroke="#3a78c6" stroke-width="2.4" stroke-linecap="round"/></svg>
<svg class="b" style="left:1018.60px;top:111.60px;" width="5.00" height="3.20" viewBox="0 0 5 3.2"><path d="M0.3 2.9L2.5 0.6L4.7 2.9" fill="none" stroke="#666" stroke-width="0.9"/></svg>
<span class="t" style="left:459.50px;top:5.70px;font-size:9px;line-height:12.60px;height:12.60px;color:#b4d3c1;font-weight:normal;font-style:normal;font-family:'Liberation Sans',sans-serif;transform:scaleX(0.9697);-webkit-text-stroke:0.2px #b4d3c1;">Лист Microsoft Excel  -  Excel</span>
<span class="t" style="left:861.50px;top:5.70px;font-size:9px;line-height:12.60px;height:12.60px;color:#1f6b41;font-weight:normal;font-style:normal;font-family:'Liberation Sans',sans-serif;transform:scaleX(0.9325);-webkit-text-stroke:0.2px #1f6b41;">Вход</span>
<span class="t" style="left:11.50px;top:30.00px;font-size:9.6px;line-height:13.00px;height:13.00px;color:#ffffff;font-weight:normal;font-style:normal;font-family:'Liberation Sans',sans-serif;transform:scaleX(0.9113);-webkit-text-stroke:0.2px #ffffff;">Файл</span>
<span class="t" style="left:55.50px;top:30.00px;font-size:9.6px;line-height:13.00px;height:13.00px;color:#217346;font-weight:normal;font-style:normal;font-family:'Liberation Sans',sans-serif;transform:scaleX(0.8982);-webkit-text-stroke:0.2px #217346;">Главная</span>
<span class="t" style="left:109.50px;top:30.00px;font-size:9.6px;line-height:13.00px;height:13.00px;color:#ffffff;font-weight:normal;font-style:normal;font-family:'Liberation Sans',sans-serif;transform:scaleX(0.8774);-webkit-text-stroke:0.2px #ffffff;">Вставка</span>
<span class="t" style="left:161.50px;top:30.00px;font-size:9.6px;line-height:13.00px;height:13.00px;color:#ffffff;font-weight:normal;font-style:normal;font-family:'Liberation Sans',sans-serif;transform:scaleX(0.9282);-webkit-text-stroke:0.2px #ffffff;">Разметка страницы</span>
<span class="t" style="left:263.00px;top:30.00px;font-size:9.6px;line-height:13.00px;height:13.00px;color:#ffffff;font-weight:normal;font-style:normal;font-family:'Liberation Sans',sans-serif;transform:scaleX(0.9820);-webkit-text-stroke:0.2px #ffffff;">Формулы</span>
<span class="t" style="left:324.00px;top:30.00px;font-size:9.6px;line-height:13.00px;height:13.00px;color:#ffffff;font-weight:normal;font-style:normal;font-family:'Liberation Sans',sans-serif;transform:scaleX(0.9518);-webkit-text-stroke:0.2px #ffffff;">Данные</span>
<span class="t" style="left:377.80px;top:30.00px;font-size:9.6px;line-height:13.00px;height:13.00px;color:#ffffff;font-weight:normal;font-style:normal;font-family:'Liberation Sans',sans-serif;transform:scaleX(0.9272);-webkit-text-stroke:0.2px #ffffff;">Рецензирование</span>
<span class="t" style="left:467.30px;top:30.00px;font-size:9.6px;line-height:13.00px;height:13.00px;color:#ffffff;font-weight:normal;font-style:normal;font-family:'Liberation Sans',sans-serif;transform:scaleX(0.8641);-webkit-text-stroke:0.2px #ffffff;">Вид</span>
<span class="t" style="left:502.30px;top:30.00px;font-size:9.6px;line-height:13.00px;height:13.00px;color:#ffffff;font-weight:normal;font-style:normal;font-family:'Liberation Sans',sans-serif;transform:scaleX(0.9219);-webkit-text-stroke:0.2px #ffffff;">Справка</span>
<span class="t" style="left:579.30px;top:30.00px;font-size:9.6px;line-height:13.00px;height:13.00px;color:#ffffff;font-weight:normal;font-style:normal;font-family:'Liberation Sans',sans-serif;transform:scaleX(0.8976);-webkit-text-stroke:0.4px #fff;">Что вы хотите сделать?</span>
<span class="t" style="left:968.00px;top:30.00px;font-size:9.6px;line-height:13.00px;height:13.00px;color:#ffffff;font-weight:normal;font-style:normal;font-family:'Liberation Sans',sans-serif;transform:scaleX(0.9248);-webkit-text-stroke:0.2px #ffffff;">Поделиться</span>
<span class="t" style="left:3.90px;top:105.00px;font-size:9.6px;line-height:13.00px;height:13.00px;color:#444444;font-weight:normal;font-style:normal;font-family:'Liberation Sans',sans-serif;transform:scaleX(0.8911);-webkit-text-stroke:0.2px #444444;">Буфер обмена</span>
<span class="t" style="left:139.00px;top:105.00px;font-size:9.6px;line-height:13.00px;height:13.00px;color:#444444;font-weight:normal;font-style:normal;font-family:'Liberation Sans',sans-serif;transform:scaleX(0.9279);-webkit-text-stroke:0.2px #444444;">Шрифт</span>
<span class="t" style="left:270.00px;top:105.00px;font-size:9.6px;line-height:13.00px;height:13.00px;color:#444444;font-weight:normal;font-style:normal;font-family:'Liberation Sans',sans-serif;transform:scaleX(0.9100);-webkit-text-stroke:0.2px #444444;">Выравнивание</span>
<span class="t" style="left:409.60px;top:105.00px;font-size:9.6px;line-height:13.00px;height:13.00px;color:#444444;font-weight:normal;font-style:normal;font-family:'Liberation Sans',sans-serif;transform:scaleX(0.8661);-webkit-text-stroke:0.2px #444444;">Число</span>
<span class="t" style="left:570.70px;top:105.00px;font-size:9.6px;line-height:13.00px;height:13.00px;color:#444444;font-weight:normal;font-style:normal;font-family:'Liberation Sans',sans-serif;transform:scaleX(0.8357);-webkit-text-stroke:0.2px #444444;">Стили</span>
<span class="t" style="left:705.40px;top:105.00px;font-size:9.6px;line-height:13.00px;height:13.00px;color:#444444;font-weight:normal;font-style:normal;font-family:'Liberation Sans',sans-serif;transform:scaleX(0.9476);-webkit-text-stroke:0.2px #444444;">Ячейки</span>
<span class="t" style="left:798.80px;top:105.00px;font-size:9.6px;line-height:13.00px;height:13.00px;color:#444444;font-weight:normal;font-style:normal;font-family:'Liberation Sans',sans-serif;transform:scaleX(0.9112);-webkit-text-stroke:0.2px #444444;">Редактирование</span>
<span class="t" style="left:7.90px;top:79.00px;font-size:9.6px;line-height:13.00px;height:13.00px;color:#b9b9b9;font-weight:normal;font-style:normal;font-family:'Liberation Sans',sans-serif;transform:scaleX(0.8876);-webkit-text-stroke:0;">Вставить</span>
<span class="t" style="left:87.50px;top:58.60px;font-size:10px;line-height:14.00px;height:14.00px;color:#262626;font-weight:normal;font-style:normal;font-family:'Liberation Sans',sans-serif;transform:scaleX(0.8961);">Calibri</span>
<span class="t" style="left:166.00px;top:58.60px;font-size:10px;line-height:14.00px;height:14.00px;color:#262626;font-weight:normal;font-style:normal;font-family:'Liberation Sans',sans-serif;transform:scaleX(0.7122);">11</span>
<span class="t" style="left:206.50px;top:58.85px;font-size:10.5px;line-height:14.70px;height:14.70px;color:#444;font-weight:normal;font-style:normal;font-family:'Liberation Sans',sans-serif;transform:scaleX(1.0405);">A</span>
<span class="t" style="left:223.70px;top:60.64px;font-size:8.8px;line-height:12.32px;height:12.32px;color:#444;font-weight:normal;font-style:normal;font-family:'Liberation Sans',sans-serif;transform:scaleX(1.0213);">A</span>
<span class="t" style="left:88.50px;top:81.95px;font-size:9.5px;line-height:13.30px;height:13.30px;color:#3b3b3b;font-weight:bold;font-style:normal;font-family:'Liberation Sans',sans-serif;transform:scaleX(1.1171);">Ж</span>
<span class="t" style="left:106.30px;top:81.95px;font-size:9.5px;line-height:13.30px;height:13.30px;color:#3b3b3b;font-weight:bold;font-style:italic;font-family:'Liberation Sans',sans-serif;transform:scaleX(1.1294);">К</span>
<span class="t" style="left:123.20px;top:81.75px;font-size:9.5px;line-height:13.30px;height:13.30px;color:#3b3b3b;font-weight:normal;font-style:normal;font-family:'Liberation Sans',sans-serif;transform:scaleX(1.0719);-webkit-text-stroke:0.4px #3b3b3b;">Ч</span>
<span class="t" style="left:381.20px;top:58.60px;font-size:10px;line-height:14.00px;height:14.00px;color:#262626;font-weight:normal;font-style:normal;font-family:'Liberation Sans',sans-serif;transform:scaleX(0.9238);">Общий</span>
<span class="t" style="left:408.20px;top:81.15px;font-size:11.5px;line-height:16.10px;height:16.10px;color:#505050;font-weight:normal;font-style:normal;font-family:'Liberation Sans',sans-serif;transform:scaleX(0.9087);-webkit-text-stroke:0.3px #505050;">%</span>
<span class="t" style="left:423.40px;top:83.56px;font-size:7.2px;line-height:10.08px;height:10.08px;color:#555;font-weight:bold;font-style:normal;font-family:'Liberation Sans',sans-serif;transform:scaleX(0.9417);">000</span>
<span class="t" style="left:511.00px;top:79.00px;font-size:9.6px;line-height:13.00px;height:13.00px;color:#3a3a3a;font-weight:normal;font-style:normal;font-family:'Liberation Sans',sans-serif;transform:scaleX(0.9467);-webkit-text-stroke:0.2px #3a3a3a;">Условное</span>
<span class="t" style="left:491.40px;top:91.00px;font-size:9.6px;line-height:13.00px;height:13.00px;color:#3a3a3a;font-weight:normal;font-style:normal;font-family:'Liberation Sans',sans-serif;transform:scaleX(0.9464);-webkit-text-stroke:0.2px #3a3a3a;">форматирование</span>
<span class="t" style="left:574.00px;top:79.00px;font-size:9.6px;line-height:13.00px;height:13.00px;color:#3a3a3a;font-weight:normal;font-style:normal;font-family:'Liberation Sans',sans-serif;transform:scaleX(0.9408);-webkit-text-stroke:0.2px #3a3a3a;">Форматировать</span>
<span class="t" style="left:579.50px;top:91.00px;font-size:9.6px;line-height:13.00px;height:13.00px;color:#3a3a3a;font-weight:normal;font-style:normal;font-family:'Liberation Sans',sans-serif;transform:scaleX(0.9344);-webkit-text-stroke:0.2px #3a3a3a;">как таблицу</span>
<span class="t" style="left:646.30px;top:79.00px;font-size:9.6px;line-height:13.00px;height:13.00px;color:#3a3a3a;font-weight:normal;font-style:normal;font-family:'Liberation Sans',sans-serif;transform:scaleX(0.8936);-webkit-text-stroke:0.2px #3a3a3a;">Стили</span>
<span class="t" style="left:643.30px;top:91.00px;font-size:9.6px;line-height:13.00px;height:13.00px;color:#3a3a3a;font-weight:normal;font-style:normal;font-family:'Liberation Sans',sans-serif;transform:scaleX(0.9297);-webkit-text-stroke:0.2px #3a3a3a;">ячеек</span>
<span class="t" style="left:704.60px;top:53.00px;font-size:9.6px;line-height:13.00px;height:13.00px;color:#3a3a3a;font-weight:normal;font-style:normal;font-family:'Liberation Sans',sans-serif;transform:scaleX(0.8802);-webkit-text-stroke:0.2px #3a3a3a;">Вставить</span>
<span class="t" style="left:704.60px;top:71.00px;font-size:9.6px;line-height:13.00px;height:13.00px;color:#3a3a3a;font-weight:normal;font-style:normal;font-family:'Liberation Sans',sans-serif;transform:scaleX(0.8870);-webkit-text-stroke:0.2px #3a3a3a;">Удалить</span>
<span class="t" style="left:704.60px;top:88.00px;font-size:9.6px;line-height:13.00px;height:13.00px;color:#3a3a3a;font-weight:normal;font-style:normal;font-family:'Liberation Sans',sans-serif;transform:scaleX(0.9327);-webkit-text-stroke:0.2px #3a3a3a;">Формат</span>
<span class="t" style="left:796.00px;top:79.00px;font-size:9.6px;line-height:13.00px;height:13.00px;color:#3a3a3a;font-weight:normal;font-style:normal;font-family:'Liberation Sans',sans-serif;transform:scaleX(0.9420);-webkit-text-stroke:0.2px #3a3a3a;">Сортировка</span>
<span class="t" style="left:798.80px;top:91.00px;font-size:9.6px;line-height:13.00px;height:13.00px;color:#3a3a3a;font-weight:normal;font-style:normal;font-family:'Liberation Sans',sans-serif;transform:scaleX(0.9447);-webkit-text-stroke:0.2px #3a3a3a;">и фильтр</span>
<span class="t" style="left:856.00px;top:79.00px;font-size:9.6px;line-height:13.00px;height:13.00px;color:#3a3a3a;font-weight:normal;font-style:normal;font-family:'Liberation Sans',sans-serif;transform:scaleX(0.9320);-webkit-text-stroke:0.2px #3a3a3a;">Найти и</span>
<span class="t" style="left:849.60px;top:91.00px;font-size:9.6px;line-height:13.00px;height:13.00px;color:#3a3a3a;font-weight:normal;font-style:normal;font-family:'Liberation Sans',sans-serif;transform:scaleX(0.9286);-webkit-text-stroke:0.2px #3a3a3a;">выделить</span>
<span class="t" style="left:9.00px;top:130.10px;font-size:10px;line-height:14.00px;height:14.00px;color:#333;font-weight:normal;font-style:normal;font-family:'Liberation Sans',sans-serif;transform:scaleX(0.9327);">K12</span>
<span class="t" style="left:169.00px;top:128.90px;font-size:11px;line-height:15.40px;height:15.40px;color:#555;font-weight:normal;font-style:italic;font-family:'Liberation Serif',sans-serif;">f</span>
<span class="t" style="left:172.60px;top:132.95px;font-size:7.5px;line-height:10.50px;height:10.50px;color:#555;font-weight:bold;font-style:italic;font-family:'Liberation Serif',sans-serif;">x</span>
<span class="t" style="left:66.65px;top:155.90px;font-size:10px;line-height:14.00px;height:14.00px;color:#333;font-weight:normal;font-style:normal;font-family:'Liberation Sans',sans-serif;width:10px;text-align:center;-webkit-text-stroke:0.25px #333;">A</span>
<span class="t" style="left:161.00px;top:155.90px;font-size:10px;line-height:14.00px;height:14.00px;color:#333;font-weight:normal;font-style:normal;font-family:'Liberation Sans',sans-serif;width:10px;text-align:center;-webkit-text-stroke:0.25px #333;">B</span>
<span class="t" style="left:235.05px;top:155.90px;font-size:10px;line-height:14.00px;height:14.00px;color:#333;font-weight:normal;font-style:normal;font-family:'Liberation Sans',sans-serif;width:10px;text-align:center;-webkit-text-stroke:0.25px #333;">C</span>
<span class="t" style="left:298.50px;top:155.90px;font-size:10px;line-height:14.00px;height:14.00px;color:#333;font-weight:normal;font-style:normal;font-family:'Liberation Sans',sans-serif;width:10px;text-align:center;-webkit-text-stroke:0.25px #333;">D</span>
<span class="t" style="left:362.10px;top:155.90px;font-size:10px;line-height:14.00px;height:14.00px;color:#333;font-weight:normal;font-style:normal;font-family:'Liberation Sans',sans-serif;width:10px;text-align:center;-webkit-text-stroke:0.25px #333;">E</span>
<span class="t" style="left:426.00px;top:155.90px;font-size:10px;line-height:14.00px;height:14.00px;color:#333;font-weight:normal;font-style:normal;font-family:'Liberation Sans',sans-serif;width:10px;text-align:center;-webkit-text-stroke:0.25px #333;">F</span>
<span class="t" style="left:489.85px;top:155.90px;font-size:10px;line-height:14.00px;height:14.00px;color:#333;font-weight:normal;font-style:normal;font-family:'Liberation Sans',sans-serif;width:10px;text-align:center;-webkit-text-stroke:0.25px #333;">G</span>
<span class="t" style="left:561.25px;top:155.90px;font-size:10px;line-height:14.00px;height:14.00px;color:#333;font-weight:normal;font-style:normal;font-family:'Liberation Sans',sans-serif;width:10px;text-align:center;-webkit-text-stroke:0.25px #333;">H</span>
<span class="t" style="left:624.75px;top:155.90px;font-size:10px;line-height:14.00px;height:14.00px;color:#333;font-weight:normal;font-style:normal;font-family:'Liberation Sans',sans-serif;width:10px;text-align:center;-webkit-text-stroke:0.25px #333;">I</span>
<span class="t" style="left:672.95px;top:155.90px;font-size:10px;line-height:14.00px;height:14.00px;color:#333;font-weight:normal;font-style:normal;font-family:'Liberation Sans',sans-serif;width:10px;text-align:center;-webkit-text-stroke:0.25px #333;">J</span>
<span class="t" style="left:734.35px;top:155.90px;font-size:10px;line-height:14.00px;height:14.00px;color:#333;font-weight:normal;font-style:normal;font-family:'Liberation Sans',sans-serif;width:10px;text-align:center;-webkit-text-stroke:0.25px #333;">K</span>
<span class="t" style="left:795.70px;top:155.90px;font-size:10px;line-height:14.00px;height:14.00px;color:#333;font-weight:normal;font-style:normal;font-family:'Liberation Sans',sans-serif;width:10px;text-align:center;-webkit-text-stroke:0.25px #333;">L</span>
<span class="t" style="left:844.05px;top:155.90px;font-size:10px;line-height:14.00px;height:14.00px;color:#333;font-weight:normal;font-style:normal;font-family:'Liberation Sans',sans-serif;width:10px;text-align:center;-webkit-text-stroke:0.25px #333;">M</span>
<span class="t" style="left:892.60px;top:155.90px;font-size:10px;line-height:14.00px;height:14.00px;color:#333;font-weight:normal;font-style:normal;font-family:'Liberation Sans',sans-serif;width:10px;text-align:center;-webkit-text-stroke:0.25px #333;">N</span>
<span class="t" style="left:941.15px;top:155.90px;font-size:10px;line-height:14.00px;height:14.00px;color:#333;font-weight:normal;font-style:normal;font-family:'Liberation Sans',sans-serif;width:10px;text-align:center;-webkit-text-stroke:0.25px #333;">O</span>
<span class="t" style="left:989.60px;top:155.90px;font-size:10px;line-height:14.00px;height:14.00px;color:#333;font-weight:normal;font-style:normal;font-family:'Liberation Sans',sans-serif;width:10px;text-align:center;-webkit-text-stroke:0.25px #333;">P</span>
<span class="t" style="left:0.00px;top:170.50px;font-size:10px;line-height:14.00px;height:14.00px;color:#2b2b2b;font-weight:normal;font-style:normal;font-family:'Liberation Sans',sans-serif;width:19.1px;text-align:center;-webkit-text-stroke:0.35px #2b2b2b;">1</span>
<span class="t" style="left:0.00px;top:185.50px;font-size:10px;line-height:14.00px;height:14.00px;color:#2b2b2b;font-weight:normal;font-style:normal;font-family:'Liberation Sans',sans-serif;width:19.1px;text-align:center;-webkit-text-stroke:0.35px #2b2b2b;">2</span>
<span class="t" style="left:0.00px;top:200.50px;font-size:10px;line-height:14.00px;height:14.00px;color:#2b2b2b;font-weight:normal;font-style:normal;font-family:'Liberation Sans',sans-serif;width:19.1px;text-align:center;-webkit-text-stroke:0.35px #2b2b2b;">3</span>
<span class="t" style="left:0.00px;top:215.50px;font-size:10px;line-height:14.00px;height:14.00px;color:#2b2b2b;font-weight:normal;font-style:normal;font-family:'Liberation Sans',sans-serif;width:19.1px;text-align:center;-webkit-text-stroke:0.35px #2b2b2b;">4</span>
<span class="t" style="left:0.00px;top:231.50px;font-size:10px;line-height:14.00px;height:14.00px;color:#2b2b2b;font-weight:normal;font-style:normal;font-family:'Liberation Sans',sans-serif;width:19.1px;text-align:center;-webkit-text-stroke:0.35px #2b2b2b;">5</span>
<span class="t" style="left:0.00px;top:246.50px;font-size:10px;line-height:14.00px;height:14.00px;color:#2b2b2b;font-weight:normal;font-style:normal;font-family:'Liberation Sans',sans-serif;width:19.1px;text-align:center;-webkit-text-stroke:0.35px #2b2b2b;">6</span>
<span class="t" style="left:0.00px;top:261.50px;font-size:10px;line-height:14.00px;height:14.00px;color:#2b2b2b;font-weight:normal;font-style:normal;font-family:'Liberation Sans',sans-serif;width:19.1px;text-align:center;-webkit-text-stroke:0.35px #2b2b2b;">7</span>
<span class="t" style="left:0.00px;top:276.50px;font-size:10px;line-height:14.00px;height:14.00px;color:#2b2b2b;font-weight:normal;font-style:normal;font-family:'Liberation Sans',sans-serif;width:19.1px;text-align:center;-webkit-text-stroke:0.35px #2b2b2b;">8</span>
<span class="t" style="left:0.00px;top:291.50px;font-size:10px;line-height:14.00px;height:14.00px;color:#2b2b2b;font-weight:normal;font-style:normal;font-family:'Liberation Sans',sans-serif;width:19.1px;text-align:center;-webkit-text-stroke:0.35px #2b2b2b;">9</span>
<span class="t" style="left:0.00px;top:307.50px;font-size:10px;line-height:14.00px;height:14.00px;color:#2b2b2b;font-weight:normal;font-style:normal;font-family:'Liberation Sans',sans-serif;width:19.1px;text-align:center;-webkit-text-stroke:0.35px #2b2b2b;">10</span>
<span class="t" style="left:0.00px;top:322.50px;font-size:10px;line-height:14.00px;height:14.00px;color:#2b2b2b;font-weight:normal;font-style:normal;font-family:'Liberation Sans',sans-serif;width:19.1px;text-align:center;-webkit-text-stroke:0.35px #2b2b2b;">11</span>
<span class="t" style="left:0.00px;top:337.50px;font-size:10px;line-height:14.00px;height:14.00px;color:#2b2b2b;font-weight:normal;font-style:normal;font-family:'Liberation Sans',sans-serif;width:19.1px;text-align:center;-webkit-text-stroke:0.35px #2b2b2b;">12</span>
<span class="t" style="left:0.00px;top:352.50px;font-size:10px;line-height:14.00px;height:14.00px;color:#2b2b2b;font-weight:normal;font-style:normal;font-family:'Liberation Sans',sans-serif;width:19.1px;text-align:center;-webkit-text-stroke:0.35px #2b2b2b;">13</span>
<span class="t" style="left:0.00px;top:367.50px;font-size:10px;line-height:14.00px;height:14.00px;color:#2b2b2b;font-weight:normal;font-style:normal;font-family:'Liberation Sans',sans-serif;width:19.1px;text-align:center;-webkit-text-stroke:0.35px #2b2b2b;">14</span>
<span class="t" style="left:0.00px;top:383.50px;font-size:10px;line-height:14.00px;height:14.00px;color:#2b2b2b;font-weight:normal;font-style:normal;font-family:'Liberation Sans',sans-serif;width:19.1px;text-align:center;-webkit-text-stroke:0.35px #2b2b2b;">15</span>
<span class="t" style="left:0.00px;top:398.50px;font-size:10px;line-height:14.00px;height:14.00px;color:#2b2b2b;font-weight:normal;font-style:normal;font-family:'Liberation Sans',sans-serif;width:19.1px;text-align:center;-webkit-text-stroke:0.35px #2b2b2b;">16</span>
<span class="t" style="left:0.00px;top:413.50px;font-size:10px;line-height:14.00px;height:14.00px;color:#2b2b2b;font-weight:normal;font-style:normal;font-family:'Liberation Sans',sans-serif;width:19.1px;text-align:center;-webkit-text-stroke:0.35px #2b2b2b;">17</span>
<span class="t" style="left:21.20px;top:171.00px;font-size:9.6px;line-height:13.00px;height:13.00px;color:#fff;font-weight:normal;font-style:normal;font-family:'Liberation Sans',sans-serif;transform:scaleX(1.0823);-webkit-text-stroke:0.45px #fff;">Часы  публикации</span>
<span class="t" style="left:125.30px;top:171.00px;font-size:9.6px;line-height:13.00px;height:13.00px;color:#fff;font-weight:normal;font-style:normal;font-family:'Liberation Sans',sans-serif;transform:scaleX(1.1485);-webkit-text-stroke:0.45px #fff;">понедельник</span>
<span class="t" style="left:209.90px;top:171.00px;font-size:9.6px;line-height:13.00px;height:13.00px;color:#fff;font-weight:normal;font-style:normal;font-family:'Liberation Sans',sans-serif;transform:scaleX(1.1238);-webkit-text-stroke:0.45px #fff;">вторник</span>
<span class="t" style="left:273.40px;top:171.00px;font-size:9.6px;line-height:13.00px;height:13.00px;color:#fff;font-weight:normal;font-style:normal;font-family:'Liberation Sans',sans-serif;transform:scaleX(1.0877);-webkit-text-stroke:0.45px #fff;">среда</span>
<span class="t" style="left:336.80px;top:171.00px;font-size:9.6px;line-height:13.00px;height:13.00px;color:#fff;font-weight:normal;font-style:normal;font-family:'Liberation Sans',sans-serif;transform:scaleX(1.1317);-webkit-text-stroke:0.45px #fff;">четверг</span>
<span class="t" style="left:400.60px;top:171.00px;font-size:9.6px;line-height:13.00px;height:13.00px;color:#fff;font-weight:normal;font-style:normal;font-family:'Liberation Sans',sans-serif;transform:scaleX(1.0887);-webkit-text-stroke:0.45px #fff;">пятница</span>
<span class="t" style="left:464.60px;top:171.00px;font-size:9.6px;line-height:13.00px;height:13.00px;color:#fff;font-weight:normal;font-style:normal;font-family:'Liberation Sans',sans-serif;transform:scaleX(1.0577);-webkit-text-stroke:0.45px #fff;">суббота</span>
<span class="t" style="left:528.30px;top:171.00px;font-size:9.6px;line-height:13.00px;height:13.00px;color:#fff;font-weight:normal;font-style:normal;font-family:'Liberation Sans',sans-serif;transform:scaleX(1.0759);-webkit-text-stroke:0.45px #fff;">воскресенье</span>
<span class="t" style="left:21.90px;top:185.50px;font-size:10px;line-height:14.00px;height:14.00px;color:#262626;font-weight:normal;font-style:normal;font-family:'Liberation Sans',sans-serif;transform:scaleX(0.9722);-webkit-text-stroke:0.2px #262626;">9.00-10.00</span>
<span class="t" style="left:21.90px;top:200.50px;font-size:10px;line-height:14.00px;height:14.00px;color:#262626;font-weight:normal;font-style:normal;font-family:'Liberation Sans',sans-serif;transform:scaleX(0.9878);-webkit-text-stroke:0.2px #262626;">10.00-11.00</span>
<span class="t" style="left:21.90px;top:215.50px;font-size:10px;line-height:14.00px;height:14.00px;color:#262626;font-weight:normal;font-style:normal;font-family:'Liberation Sans',sans-serif;transform:scaleX(0.9740);-webkit-text-stroke:0.2px #262626;">12.00-13.00</span>
<span class="t" style="left:21.90px;top:230.50px;font-size:10px;line-height:14.00px;height:14.00px;color:#262626;font-weight:normal;font-style:normal;font-family:'Liberation Sans',sans-serif;transform:scaleX(0.9740);-webkit-text-stroke:0.2px #262626;">14.00-15.00</span>
<span class="t" style="left:21.90px;top:246.50px;font-size:10px;line-height:14.00px;height:14.00px;color:#262626;font-weight:normal;font-style:normal;font-family:'Liberation Sans',sans-serif;transform:scaleX(0.9702);-webkit-text-stroke:0.2px #262626;">16.00 -17.00</span>
<span class="t" style="left:21.90px;top:261.50px;font-size:10px;line-height:14.00px;height:14.00px;color:#262626;font-weight:normal;font-style:normal;font-family:'Liberation Sans',sans-serif;transform:scaleX(0.9740);-webkit-text-stroke:0.2px #262626;">18.00-19.00</span>
<span class="t" style="left:21.90px;top:276.50px;font-size:10px;line-height:14.00px;height:14.00px;color:#262626;font-weight:normal;font-style:normal;font-family:'Liberation Sans',sans-serif;transform:scaleX(0.9740);-webkit-text-stroke:0.2px #262626;">19.00-20.00</span>
<span class="t" style="left:21.90px;top:291.50px;font-size:10px;line-height:14.00px;height:14.00px;color:#262626;font-weight:normal;font-style:normal;font-family:'Liberation Sans',sans-serif;transform:scaleX(0.9740);-webkit-text-stroke:0.2px #262626;">20.00-21.00</span>
<span class="t" style="left:21.90px;top:306.50px;font-size:10px;line-height:14.00px;height:14.00px;color:#262626;font-weight:normal;font-style:normal;font-family:'Liberation Sans',sans-serif;transform:scaleX(0.9740);-webkit-text-stroke:0.2px #262626;">21.00-22.00</span>
<span class="t" style="left:21.90px;top:322.50px;font-size:10px;line-height:14.00px;height:14.00px;color:#262626;font-weight:normal;font-style:normal;font-family:'Liberation Sans',sans-serif;transform:scaleX(0.9740);-webkit-text-stroke:0.2px #262626;">22.00-23.00</span>
<span class="t" style="left:21.90px;top:337.50px;font-size:10px;line-height:14.00px;height:14.00px;color:#262626;font-weight:normal;font-style:normal;font-family:'Liberation Sans',sans-serif;transform:scaleX(0.9740);-webkit-text-stroke:0.2px #262626;">23.00-24.00</span>
<span class="t" style="left:126.00px;top:185.50px;font-size:10px;line-height:14.00px;height:14.00px;color:#262626;font-weight:normal;font-style:normal;font-family:'Liberation Sans',sans-serif;transform:scaleX(1.0420);-webkit-text-stroke:0.2px #262626;">вовлекающий</span>
<span class="t" style="left:401.30px;top:200.50px;font-size:10px;line-height:14.00px;height:14.00px;color:#262626;font-weight:normal;font-style:normal;font-family:'Liberation Sans',sans-serif;transform:scaleX(1.0808);-webkit-text-stroke:0.2px #262626;">бренд</span>
<span class="t" style="left:274.10px;top:215.50px;font-size:10px;line-height:14.00px;height:14.00px;color:#262626;font-weight:normal;font-style:normal;font-family:'Liberation Sans',sans-serif;transform:scaleX(1.0512);-webkit-text-stroke:0.2px #262626;">обучающий</span>
<span class="t" style="left:465.30px;top:215.50px;font-size:10px;line-height:14.00px;height:14.00px;color:#262626;font-weight:normal;font-style:normal;font-family:'Liberation Sans',sans-serif;transform:scaleX(1.0420);-webkit-text-stroke:0.2px #262626;">вовлекающий</span>
<span class="t" style="left:210.60px;top:230.50px;font-size:10px;line-height:14.00px;height:14.00px;color:#262626;font-weight:normal;font-style:normal;font-family:'Liberation Sans',sans-serif;transform:scaleX(1.0420);-webkit-text-stroke:0.2px #262626;">вовлекающий</span>
<span class="t" style="left:337.50px;top:230.50px;font-size:10px;line-height:14.00px;height:14.00px;color:#262626;font-weight:normal;font-style:normal;font-family:'Liberation Sans',sans-serif;transform:scaleX(1.0512);-webkit-text-stroke:0.2px #262626;">обучающий</span>
<span class="t" style="left:529.00px;top:230.50px;font-size:10px;line-height:14.00px;height:14.00px;color:#262626;font-weight:normal;font-style:normal;font-family:'Liberation Sans',sans-serif;transform:scaleX(1.0808);-webkit-text-stroke:0.2px #262626;">бренд</span>
<span class="t" style="left:126.00px;top:246.50px;font-size:10px;line-height:14.00px;height:14.00px;color:#262626;font-weight:normal;font-style:normal;font-family:'Liberation Sans',sans-serif;transform:scaleX(1.0512);-webkit-text-stroke:0.2px #262626;">обучающий</span>
<span class="t" style="left:401.30px;top:261.50px;font-size:10px;line-height:14.00px;height:14.00px;color:#262626;font-weight:normal;font-style:normal;font-family:'Liberation Sans',sans-serif;transform:scaleX(1.0512);-webkit-text-stroke:0.2px #262626;">обучающий</span>
<span class="t" style="left:529.00px;top:261.50px;font-size:10px;line-height:14.00px;height:14.00px;color:#262626;font-weight:normal;font-style:normal;font-family:'Liberation Sans',sans-serif;transform:scaleX(1.0420);-webkit-text-stroke:0.2px #262626;">вовлекающий</span>
<span class="t" style="left:274.10px;top:276.50px;font-size:10px;line-height:14.00px;height:14.00px;color:#262626;font-weight:normal;font-style:normal;font-family:'Liberation Sans',sans-serif;transform:scaleX(1.0420);-webkit-text-stroke:0.2px #262626;">вовлекающий</span>
<span class="t" style="left:465.30px;top:276.50px;font-size:10px;line-height:14.00px;height:14.00px;color:#262626;font-weight:normal;font-style:normal;font-family:'Liberation Sans',sans-serif;transform:scaleX(1.0512);-webkit-text-stroke:0.2px #262626;">обучающий</span>
<span class="t" style="left:210.60px;top:291.50px;font-size:10px;line-height:14.00px;height:14.00px;color:#262626;font-weight:normal;font-style:normal;font-family:'Liberation Sans',sans-serif;transform:scaleX(1.0519);-webkit-text-stroke:0.2px #262626;">реклама</span>
<span class="t" style="left:126.00px;top:306.50px;font-size:10px;line-height:14.00px;height:14.00px;color:#262626;font-weight:normal;font-style:normal;font-family:'Liberation Sans',sans-serif;transform:scaleX(1.0808);-webkit-text-stroke:0.2px #262626;">бренд</span>
<span class="t" style="left:337.50px;top:306.50px;font-size:10px;line-height:14.00px;height:14.00px;color:#262626;font-weight:normal;font-style:normal;font-family:'Liberation Sans',sans-serif;transform:scaleX(1.0420);-webkit-text-stroke:0.2px #262626;">вовлекающий</span>
<span class="t" style="left:529.00px;top:306.50px;font-size:10px;line-height:14.00px;height:14.00px;color:#262626;font-weight:normal;font-style:normal;font-family:'Liberation Sans',sans-serif;transform:scaleX(1.0519);-webkit-text-stroke:0.2px #262626;">реклама</span>
<span class="t" style="left:274.10px;top:322.50px;font-size:10px;line-height:14.00px;height:14.00px;color:#262626;font-weight:normal;font-style:normal;font-family:'Liberation Sans',sans-serif;transform:scaleX(1.0808);-webkit-text-stroke:0.2px #262626;">бренд</span>
<span class="t" style="left:401.30px;top:337.50px;font-size:10px;line-height:14.00px;height:14.00px;color:#262626;font-weight:normal;font-style:normal;font-family:'Liberation Sans',sans-serif;transform:scaleX(1.0420);-webkit-text-stroke:0.2px #262626;">вовлекающий</span>
<span class="t" style="left:704.50px;top:185.50px;font-size:10px;line-height:14.00px;height:14.00px;color:#262626;font-weight:normal;font-style:normal;font-family:'Liberation Sans',sans-serif;transform:scaleX(1.0420);-webkit-text-stroke:0.2px #262626;">вовлекающий</span>
<span class="t" style="left:704.50px;top:215.50px;font-size:10px;line-height:14.00px;height:14.00px;color:#262626;font-weight:normal;font-style:normal;font-family:'Liberation Sans',sans-serif;transform:scaleX(1.0512);-webkit-text-stroke:0.2px #262626;">обучающий</span>
<span class="t" style="left:704.50px;top:246.50px;font-size:10px;line-height:14.00px;height:14.00px;color:#262626;font-weight:normal;font-style:normal;font-family:'Liberation Sans',sans-serif;transform:scaleX(1.0808);-webkit-text-stroke:0.2px #262626;">бренд</span>
<span class="t" style="left:704.50px;top:276.50px;font-size:10px;line-height:14.00px;height:14.00px;color:#262626;font-weight:normal;font-style:normal;font-family:'Liberation Sans',sans-serif;transform:scaleX(1.0519);-webkit-text-stroke:0.2px #262626;">реклама</span>
<span class="t" style="left:214.50px;top:80.55px;font-size:10.5px;line-height:14.70px;height:14.70px;color:#555;font-weight:normal;font-style:normal;font-family:'Liberation Sans',sans-serif;transform:scaleX(0.9693);-webkit-text-stroke:0.3px #555;">A</span>
<span class="t" style="left:343.40px;top:56.98px;font-size:8.6px;line-height:12.04px;height:12.04px;color:#444;font-weight:normal;font-style:normal;font-family:'Liberation Sans',sans-serif;transform:scaleX(0.9203);-webkit-text-stroke:0.35px #444;">ab</span>
<span class="t" style="left:343.50px;top:62.38px;font-size:8.6px;line-height:12.04px;height:12.04px;color:#444;font-weight:normal;font-style:normal;font-family:'Liberation Sans',sans-serif;transform:scaleX(0.9309);-webkit-text-stroke:0.35px #444;">c</span>
<span class="t" style="left:453.60px;top:80.98px;font-size:6.6px;line-height:9.24px;height:9.24px;color:#555;font-weight:bold;font-style:normal;font-family:'Liberation Sans',sans-serif;transform:scaleX(0.9260);">0</span>
<span class="t" style="left:448.00px;top:86.78px;font-size:6.6px;line-height:9.24px;height:9.24px;color:#555;font-weight:bold;font-style:normal;font-family:'Liberation Sans',sans-serif;transform:scaleX(0.9813);">,00</span>
<span class="t" style="left:464.80px;top:80.98px;font-size:6.6px;line-height:9.24px;height:9.24px;color:#555;font-weight:bold;font-style:normal;font-family:'Liberation Sans',sans-serif;transform:scaleX(0.9813);">,00</span>
<span class="t" style="left:468.40px;top:86.78px;font-size:6.6px;line-height:9.24px;height:9.24px;color:#555;font-weight:bold;font-style:normal;font-family:'Liberation Sans',sans-serif;transform:scaleX(1.0182);">,0</span>
<span class="t" style="left:809.60px;top:52.15px;font-size:11.5px;line-height:16.10px;height:16.10px;color:#3a78c6;font-weight:bold;font-style:normal;font-family:'Liberation Sans',sans-serif;transform:scaleX(0.9383);">А</span>
<span class="t" style="left:810.20px;top:63.84px;font-size:10.8px;line-height:15.12px;height:15.12px;color:#9a55b5;font-weight:bold;font-style:normal;font-family:'Liberation Sans',sans-serif;transform:scaleX(0.9014);">Я</span>
</body></html>
